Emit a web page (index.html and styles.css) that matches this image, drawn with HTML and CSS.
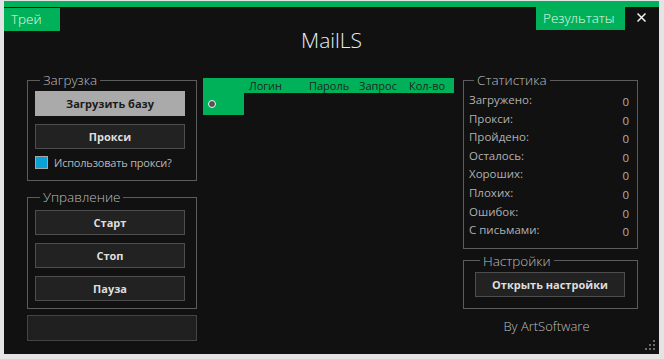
FILE: index.html
```html
<!DOCTYPE html>
<html lang="ru">
<head>
    <meta charset="UTF-8">
    <title>MailLS</title>
    <link rel="stylesheet" href="styles.css">
</head>
<body>
    <div class="window">
        <div class="topbar"></div>

        <div class="header">
            <div class="head-left">
                <div class="tab tab-tray">Трей</div>
            </div>
            <div class="title">MailLS</div>
            <div class="head-right">
                <div class="tab tab-results">Результаты</div>
                <div class="close">
                    <svg width="9" height="9" viewBox="0 0 9 9">
                        <path d="M0.5 0.5 L8.5 8.5 M8.5 0.5 L0.5 8.5" stroke="#f2f2f2" stroke-width="1.5" fill="none"/>
                    </svg>
                </div>
            </div>
        </div>

        <div class="main">
            <!-- левая колонка -->
            <div class="col-left">
                <fieldset class="group group-load">
                    <legend>Загрузка</legend>
                    <button class="btn btn-light">Загрузить базу</button>
                    <button class="btn">Прокси</button>
                    <label class="check">
                        <span class="check-box"></span>
                        Использовать прокси?
                    </label>
                </fieldset>

                <fieldset class="group group-control">
                    <legend>Управление</legend>
                    <button class="btn">Старт</button>
                    <button class="btn">Стоп</button>
                    <button class="btn">Пауза</button>
                </fieldset>

                <div class="status-box"></div>
            </div>

            <!-- таблица -->
            <div class="col-grid">
                <div class="grid-head">
                    <div class="cell cell-row"></div>
                    <div class="cell cell-login">Логин</div>
                    <div class="cell">Пароль</div>
                    <div class="cell">Запрос</div>
                    <div class="cell">Кол-во</div>
                </div>
                <div class="grid-row">
                    <span class="row-dot"></span>
                </div>
            </div>

            <!-- правая колонка -->
            <div class="col-right">
                <fieldset class="group group-stats">
                    <legend>Статистика</legend>
                    <div class="stat"><span>Загружено:</span><span class="val">0</span></div>
                    <div class="stat"><span>Прокси:</span><span class="val">0</span></div>
                    <div class="stat"><span>Пройдено:</span><span class="val">0</span></div>
                    <div class="stat"><span>Осталось:</span><span class="val">0</span></div>
                    <div class="stat"><span>Хороших:</span><span class="val">0</span></div>
                    <div class="stat"><span>Плохих:</span><span class="val">0</span></div>
                    <div class="stat"><span>Ошибок:</span><span class="val">0</span></div>
                    <div class="stat"><span>С письмами:</span><span class="val">0</span></div>
                </fieldset>

                <fieldset class="group group-settings">
                    <legend>Настройки</legend>
                    <button class="btn">Открыть настройки</button>
                </fieldset>

                <div class="author">By ArtSoftware</div>
            </div>
        </div>

        <svg class="grip" width="10" height="10" viewBox="0 0 10 10">
            <rect x="8" y="0" width="2" height="2" fill="#6a6a6a"/>
            <rect x="4" y="4" width="2" height="2" fill="#6a6a6a"/>
            <rect x="8" y="4" width="2" height="2" fill="#6a6a6a"/>
            <rect x="0" y="8" width="2" height="2" fill="#6a6a6a"/>
            <rect x="4" y="8" width="2" height="2" fill="#6a6a6a"/>
            <rect x="8" y="8" width="2" height="2" fill="#6a6a6a"/>
        </svg>
    </div>
</body>
</html>
```

FILE: styles.css
```css
body {
    margin: 0;
    background-color: #e4e4e4;
    font-family: 'Open Sans', 'Noto Sans', sans-serif;
}

.window {
    position: relative;
    width: 655px;
    height: 353px;
    margin: 1px 5px 5px 4px;
    background-color: #111111;
    overflow: hidden;
}

.topbar {
    height: 6px;
    background-color: #00b159;
}

.header {
    display: grid;
    grid-template-columns: 1fr auto 1fr;
    height: 64px;
}

.head-right {
    display: flex;
    justify-content: flex-end;
    align-items: flex-start;
}

.tab {
    display: inline-block;
    height: 23px;
    line-height: 22px;
    padding: 0 7px;
    box-sizing: border-box;
    font-size: 13.5px;
    font-weight: 300;
    color: #e9f7ee;
    background-color: #00b159;
}

.tab-tray {
    width: 56px;
}

.tab-results {
    width: 89px;
}

.close {
    width: 34px;
    height: 23px;
    display: flex;
    justify-content: center;
    align-items: center;
    padding: 0 2px 2px 0;
    box-sizing: border-box;
}

.title {
    padding-top: 20px;
    font-size: 21px;
    font-weight: 300;
    line-height: 26px;
    color: #e6eef5;
}

.main {
    display: flex;
    align-items: flex-start;
    padding-left: 23px;
}

.col-left {
    width: 170px;
}

.col-grid {
    width: 251px;
    margin: 7px 0 0 6px;
}

.col-right {
    width: 175px;
    margin-left: 9px;
}

/* группы */
.group {
    margin: 0;
    padding: 2px 11px 11px 7px;
    border: 1px solid #5c5c5c;
    min-width: 0;
}

.group legend {
    margin-left: 5px;
    padding: 0 3px;
    font-size: 13.5px;
    font-weight: 300;
    line-height: 18px;
    color: #bdbdbd;
}

.btn {
    display: block;
    width: 150px;
    height: 25px;
    padding: 0;
    font-family: 'Open Sans', 'Noto Sans', sans-serif;
    font-size: 11px;
    font-weight: bold;
    color: #dedede;
    background-color: #222222;
    border: 1px solid #4e4e4e;
}

.btn-light {
    color: #1b1b1b;
    background-color: #aaaaaa;
    border-color: #aaaaaa;
}

.group-load .btn + .btn {
    margin-top: 8px;
}

.check {
    display: flex;
    align-items: center;
    margin-top: 7px;
    white-space: nowrap;
    font-size: 11px;
    letter-spacing: -0.2px;
    line-height: 13px;
    color: #b8b8b8;
}

.check-box {
    flex: none;
    width: 11px;
    height: 11px;
    margin-right: 6px;
    border: 1px solid #a6a6a6;
    background-color: #0aa2d6;
}

.group-control {
    margin-top: 7px;
    padding-top: 4px;
    padding-bottom: 7px;
}

.group-control .btn + .btn {
    margin-top: 8px;
}

.status-box {
    height: 24px;
    margin-top: 6px;
    background-color: #202020;
    border: 1px solid #444444;
}

/* таблица */
.grid-head {
    display: flex;
    height: 15px;
    background-color: #00b159;
}

.cell {
    width: 50px;
    padding-left: 5px;
    box-sizing: border-box;
    white-space: nowrap;
    font-size: 11px;
    line-height: 16px;
    color: #1b2a20;
}

.cell-row {
    width: 41px;
}

.cell-login {
    width: 60px;
}

.grid-row {
    width: 41px;
    height: 22px;
    display: flex;
    align-items: center;
    padding-left: 5px;
    box-sizing: border-box;
    background-color: #00b159;
}

.row-dot {
    width: 6px;
    height: 6px;
    border-radius: 50%;
    border: 1px solid #f4f4f4;
    background-color: #555555;
}

/* статистика */
.group-stats {
    padding: 2px 8px 8px 5px;
}

.stat {
    display: flex;
    justify-content: space-between;
    height: 18.6px;
    line-height: 18.6px;
    font-size: 11.5px;
    color: #b0b0b0;
}

.stat .val {
    margin-top: 2px;
}

.group-settings {
    margin-top: 3px;
    padding: 2px 11px 11px 11px;
}

.author {
    margin-top: 8px;
    padding-right: 8px;
    text-align: center;
    font-size: 13px;
    font-weight: 300;
    color: #bcbcbc;
}

.grip {
    position: absolute;
    right: 4px;
    bottom: 4px;
}
```
